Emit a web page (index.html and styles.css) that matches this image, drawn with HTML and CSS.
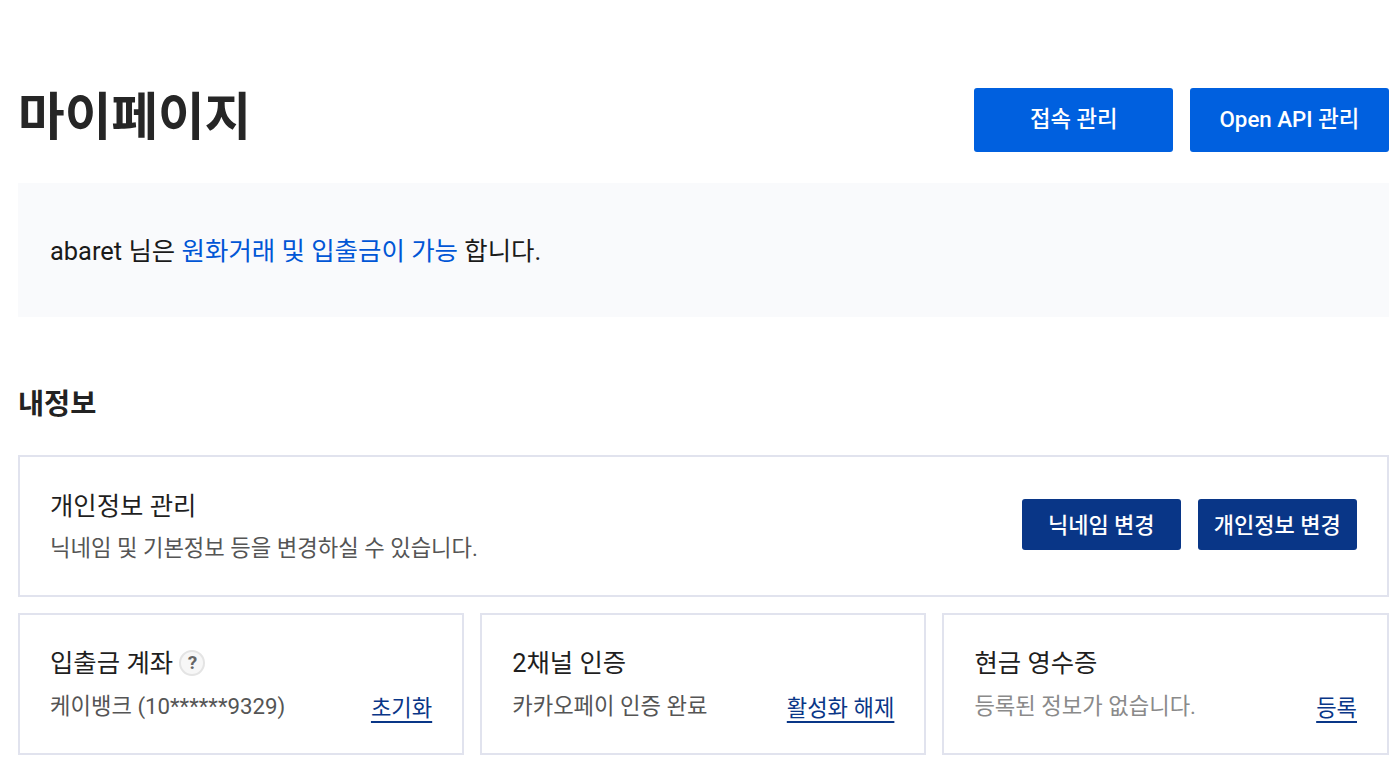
FILE: index.html
```html
<!DOCTYPE html>
<html lang="ko">
<head>
<meta charset="utf-8">
<title>마이페이지</title>
<link rel="stylesheet" href="styles.css">
</head>
<body>
<main class="page">
  <header class="head">
    <h1 class="title">마이페이지</h1>
    <div class="head-actions">
      <a class="btn btn-primary">접속 관리</a>
      <a class="btn btn-primary">Open API 관리</a>
    </div>
  </header>
  <p class="notice">abaret 님은 <span class="accent">원화거래 및 입출금이 가능</span> 합니다.</p>
  <h2 class="section">내정보</h2>
  <section class="card card-wide">
    <div>
      <h3 class="card-title">개인정보 관리</h3>
      <p class="card-text">닉네임 및 기본정보 등을 변경하실 수 있습니다.</p>
    </div>
    <div class="card-actions">
      <a class="btn btn-navy">닉네임 변경</a>
      <a class="btn btn-navy">개인정보 변경</a>
    </div>
  </section>
  <div class="grid">
    <section class="card">
      <h3 class="card-title">입출금 계좌 <span class="help">?</span></h3>
      <div class="row"><p class="card-text">케이뱅크 (10******9329)</p><a class="link">초기화</a></div>
    </section>
    <section class="card">
      <h3 class="card-title">2채널 인증</h3>
      <div class="row"><p class="card-text">카카오페이 인증 완료</p><a class="link">활성화 해제</a></div>
    </section>
    <section class="card">
      <h3 class="card-title">현금 영수증</h3>
      <div class="row"><p class="card-text muted">등록된 정보가 없습니다.</p><a class="link">등록</a></div>
    </section>
  </div>
</main>
</body>
</html>
```
FILE: styles.css
```css
* { box-sizing: border-box; }
html, body { margin: 0; height: 764px; overflow: hidden; background: #fff; }
body { font-family: Roboto, "Noto Sans CJK KR", sans-serif; color: #1f1f1f; }
.page { padding: 87.5px 11px 0 18px; }
.head { display: flex; justify-content: space-between; align-items: center; height: 64px; }
.title { margin: 0 0 4px; font-size: 50.7px; line-height: 60px; font-weight: 700; color: #262626; }
.head-actions { display: flex; gap: 16.3px; }
.btn { display: flex; align-items: center; justify-content: center; border-radius: 3px; color: #fff; font-weight: 500; }
.btn-primary { width: 199.3px; height: 64px; padding-bottom: 5px; background: #0060df; font-size: 22.3px; }
.notice { margin: 31.5px 0 0; height: 134px; padding: 0 0 3px 32px; display: flex; align-items: center; white-space: pre-wrap; background: #f9fafc; font-size: 25.45px; color: #1a1a1a; }
.accent { color: #0056d6; }
.section { margin: 66px 0 0; padding-top: 2px; font-size: 28.4px; line-height: 40px; font-weight: 700; color: #222; }
.card { border: 2px solid #e1e3ee; padding: 30px 30px 0; background: #fff; }
.card-wide { margin-top: 30px; height: 142px; display: flex; justify-content: space-between; align-items: center; padding: 0 30px; }
.card-title { margin: 0; font-size: 25.4px; line-height: 34px; font-weight: 400; color: #1f1f1f; display: flex; align-items: center; white-space: pre-wrap; }
.card-text { margin: 9px 0 0; font-size: 22.25px; line-height: 32px; color: #555; }
.card-actions { display: flex; gap: 16.5px; margin-bottom: 4px; }
.btn-navy { width: 159.5px; height: 51px; padding-bottom: 3px; background: #093687; font-size: 22px; }
.grid { margin-top: 16px; display: grid; grid-template-columns: 446.2px 446.2px 1fr; column-gap: 16px; }
.grid .card { height: 142px; padding-top: 31px; }
.row { display: flex; justify-content: space-between; align-items: flex-start; }
.row .card-text { margin-top: 10px; }
.row .link { margin-top: 12px; }
.muted { color: #8a8a8a; }
.link { color: #093687; font-size: 22.2px; line-height: 32px; text-decoration: underline; text-underline-offset: 5px; }
.help { display: inline-flex; align-items: center; justify-content: center; width: 26px; height: 26px; border-radius: 50%; border: 2px solid #e4e4e4; background: #f7f7f7; color: #666; font-size: 19px; font-weight: 700; }
```
